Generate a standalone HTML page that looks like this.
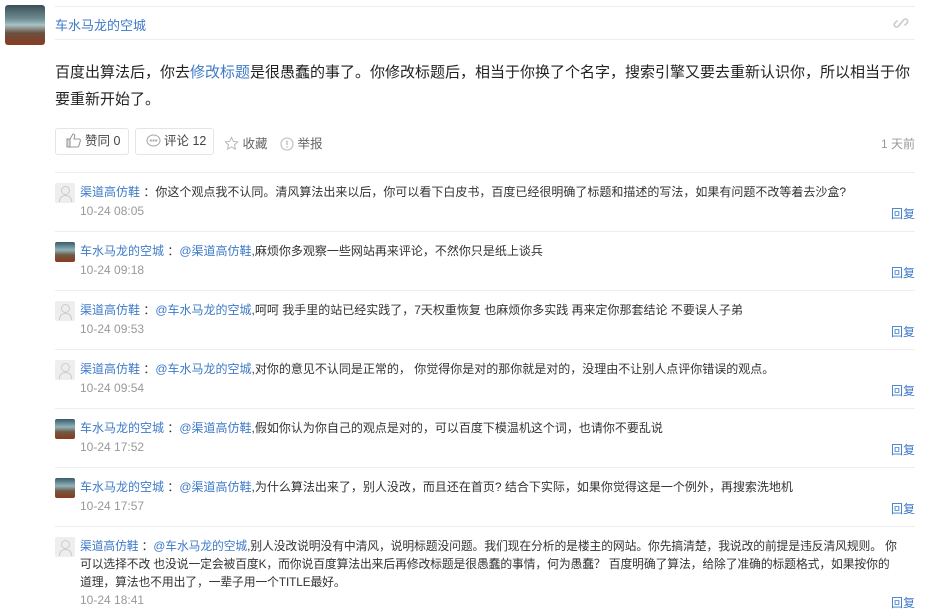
<!DOCTYPE html>
<html><head><meta charset="utf-8"><style>
body{margin:0;width:938px;height:616px;background:#fff;font-family:"Liberation Sans","Noto Sans CJK SC",sans-serif;color:#333;position:relative;overflow:hidden}
.a{position:absolute}
.blue{color:#3e7ac8}
.line{position:absolute;left:55px;width:860px;height:1px;background:#eee}
.av{position:absolute;width:40px;height:40px;border-radius:3px;background:linear-gradient(180deg,#3a4f55 0%,#6f8d93 35%,#a6c3c6 50%,#6b5040 70%,#8a3b20 100%)}
.sav{position:absolute;left:55px;width:20px;height:20px;border-radius:2px}
.g{background:#eee}
.g::after{content:"";position:absolute;left:6px;top:3px;width:7px;height:7px;border:1px solid #ccc;border-radius:50%}
.g::before{content:"";position:absolute;left:4px;top:12px;width:11px;height:6px;border:1px solid #ccc;border-bottom:none;border-radius:6px 6px 0 0}
.p{background:linear-gradient(180deg,#3b5a66 0%,#8fb4bb 40%,#6f5a44 65%,#8b3a1d 100%)}
.c{position:absolute;left:80px;width:836px;font-size:12px;line-height:18px}
.t{position:absolute;left:80px;font-size:12px;color:#999}
.r{position:absolute;right:23px;font-size:12px;color:#3e7ac8}
.btn{position:absolute;top:128px;height:27px;border:1px solid #e5e5e5;border-radius:3px;font-size:12.5px;line-height:25px;color:#444;box-sizing:border-box}
.btn svg{vertical-align:-3px;margin-right:3px}
</style></head><body>
<div class="av" style="left:5px;top:5px"></div>
<div class="line" style="top:6px"></div>
<div class="line" style="top:39px"></div>
<div class="a blue" style="left:55px;top:15px;font-size:13px">车水马龙的空城</div>
<svg class="a" style="left:893px;top:15px" width="16" height="16" viewBox="0 0 16 16" fill="none" stroke="#ccc" stroke-width="1.6"><path d="M7 9.5l-1.8 1.8a2.3 2.3 0 0 1-3.3-3.3L4.5 5.5M9 6.5l1.8-1.8a2.3 2.3 0 0 1 3.3 3.3L11.5 10.5M6 10l4-4"/></svg>
<div class="a" style="left:55px;top:59px;width:866px;font-size:15px;line-height:27px;color:#222">百度出算法后，你去<span class="blue">修改标题</span>是很愚蠢的事了。你修改标题后，相当于你换了个名字，搜索引擎又要去重新认识你，所以相当于你要重新开始了。</div>
<div class="btn" style="left:55px;width:74px;padding-left:10px"><svg width="16" height="15" viewBox="0 0 16 15" fill="none" stroke="#999" stroke-width="1.1"><rect x="1" y="6" width="3" height="8" fill="#ddd"/><path d="M4 6l3-5c1.5 0 2 1 1.6 2.5L8 6h5c1 0 1.6 1 1.3 2l-1.5 5c-.2.7-.8 1-1.5 1H4"/></svg>赞同 0</div>
<div class="btn" style="left:135px;width:79px;padding-left:10px"><svg width="15" height="14" viewBox="0 0 15 14" fill="none" stroke="#aaa" stroke-width="1.1"><ellipse cx="7.5" cy="6.5" rx="6.5" ry="5.5"/><circle cx="4.8" cy="6.5" r=".6" fill="#aaa"/><circle cx="7.5" cy="6.5" r=".6" fill="#aaa"/><circle cx="10.2" cy="6.5" r=".6" fill="#aaa"/></svg>评论 12</div>
<div class="a" style="left:224px;top:133px;font-size:12.5px;color:#666"><svg width="15" height="15" viewBox="0 0 16 16" fill="none" stroke="#bbb" stroke-width="1.1" style="vertical-align:-3px"><path d="M8 1.5l2 4.3 4.6.5-3.4 3.1 1 4.6L8 11.7 3.8 14l1-4.6L1.4 6.3 6 5.8z"/></svg> 收藏</div>
<div class="a" style="left:280px;top:133px;font-size:12.5px;color:#666"><svg width="14" height="14" viewBox="0 0 14 14" style="vertical-align:-3px"><circle cx="7" cy="7" r="6" fill="none" stroke="#bbb" stroke-width="1.1"/><path d="M7 3.5v4.5" stroke="#bbb" stroke-width="1.3"/><circle cx="7" cy="10" r=".8" fill="#bbb"/></svg> 举报</div>
<div class="a" style="right:23px;top:135px;font-size:12px;color:#999">1 天前</div>
<div class="line" style="top:172px"></div>

<div class="sav g" style="top:183px"></div>
<div class="c" style="top:183px"><span class="blue">渠道高仿鞋</span> ：你这个观点我不认同。清风算法出来以后，你可以看下白皮书，百度已经很明确了标题和描述的写法，如果有问题不改等着去沙盒?</div>
<div class="t" style="top:204px">10-24 08:05</div><div class="r" style="top:205px">回复</div>
<div class="line" style="top:231px"></div>

<div class="sav p" style="top:242px"></div>
<div class="c" style="top:242px"><span class="blue">车水马龙的空城</span> ：<span class="blue">@渠道高仿鞋</span>,麻烦你多观察一些网站再来评论，不然你只是纸上谈兵</div>
<div class="t" style="top:263px">10-24 09:18</div><div class="r" style="top:264px">回复</div>
<div class="line" style="top:290px"></div>

<div class="sav g" style="top:301px"></div>
<div class="c" style="top:301px"><span class="blue">渠道高仿鞋</span> ：<span class="blue">@车水马龙的空城</span>,呵呵 我手里的站已经实践了，7天权重恢复 也麻烦你多实践 再来定你那套结论 不要误人子弟</div>
<div class="t" style="top:322px">10-24 09:53</div><div class="r" style="top:323px">回复</div>
<div class="line" style="top:349px"></div>

<div class="sav g" style="top:360px"></div>
<div class="c" style="top:360px"><span class="blue">渠道高仿鞋</span> ：<span class="blue">@车水马龙的空城</span>,对你的意见不认同是正常的， 你觉得你是对的那你就是对的，没理由不让别人点评你错误的观点。</div>
<div class="t" style="top:381px">10-24 09:54</div><div class="r" style="top:382px">回复</div>
<div class="line" style="top:408px"></div>

<div class="sav p" style="top:419px"></div>
<div class="c" style="top:419px"><span class="blue">车水马龙的空城</span> ：<span class="blue">@渠道高仿鞋</span>,假如你认为你自己的观点是对的，可以百度下模温机这个词，也请你不要乱说</div>
<div class="t" style="top:440px">10-24 17:52</div><div class="r" style="top:441px">回复</div>
<div class="line" style="top:467px"></div>

<div class="sav p" style="top:478px"></div>
<div class="c" style="top:478px"><span class="blue">车水马龙的空城</span> ：<span class="blue">@渠道高仿鞋</span>,为什么算法出来了，别人没改，而且还在首页? 结合下实际，如果你觉得这是一个例外，再搜索洗地机</div>
<div class="t" style="top:499px">10-24 17:57</div><div class="r" style="top:500px">回复</div>
<div class="line" style="top:526px"></div>

<div class="sav g" style="top:537px"></div>
<div class="c" style="top:537px;white-space:nowrap;font-size:11.8px;letter-spacing:-0.1px"><span class="blue">渠道高仿鞋</span> ：<span class="blue">@车水马龙的空城</span>,别人没改说明没有中清风，说明标题没问题。我们现在分析的是楼主的网站。你先搞清楚，我说改的前提是违反清风规则。 你<br>可以选择不改 也没说一定会被百度K，而你说百度算法出来后再修改标题是很愚蠢的事情，何为愚蠢？ 百度明确了算法，给除了准确的标题格式，如果按你的<br>道理，算法也不用出了，一辈子用一个TITLE最好。</div>
<div class="t" style="top:593px">10-24 18:41</div><div class="r" style="top:594px">回复</div>
</body></html>
